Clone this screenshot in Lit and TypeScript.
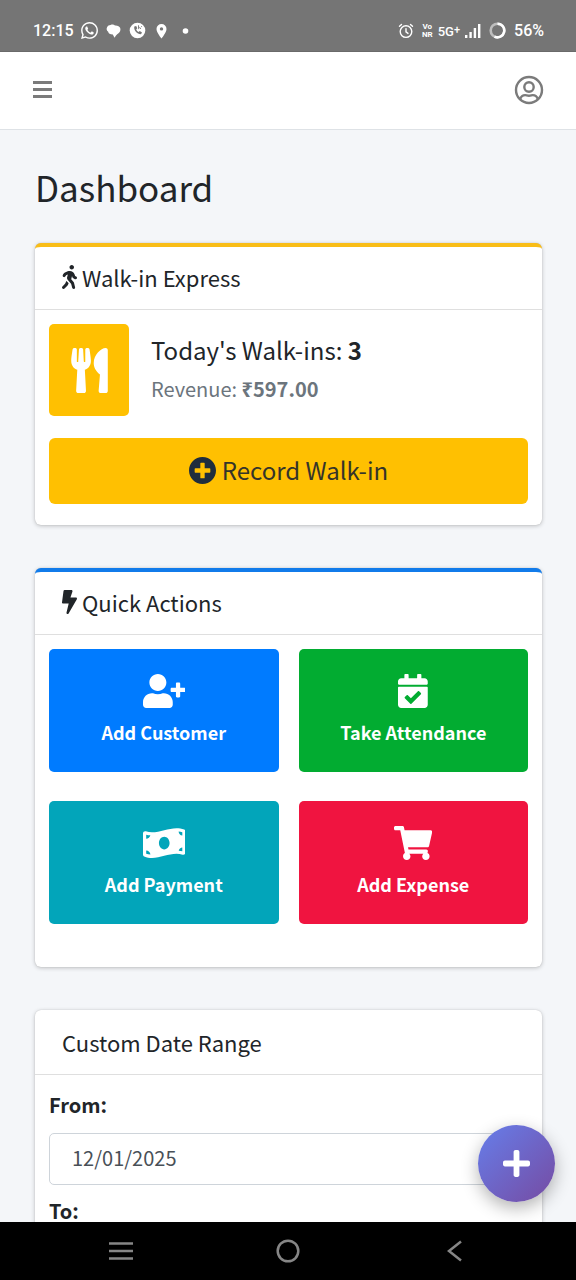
import { LitElement, html, css, svg, nothing } from "lit";
import { customElement, property } from "lit/decorators.js";

interface Glyph {
  box: string;
  path: string;
}

const GLYPHS: Record<string, Glyph> = {
  walking: {
    box: "0 0 320 512",
    path: "M208 96c26.5 0 48-21.5 48-48S234.5 0 208 0s-48 21.5-48 48 21.5 48 48 48zm94.5 149.1l-23.3-11.8-9.7-29.4c-14.7-44.6-55.7-75.8-102.2-75.9-36-.1-55.9 10.1-93.3 25.2-21.6 8.7-39.3 25.2-49.7 46.2L17.6 213c-7.8 15.8-1.5 35 14.2 42.9 15.6 7.9 34.6 1.5 42.5-14.3L81 228c3.5-7 9.3-12.5 16.5-15.4l26.8-10.8-15.2 60.7c-5.2 20.8.4 42.9 14.9 58.8l59.9 65.4c7.2 7.9 12.3 17.4 14.9 27.7l18.3 73.3c4.3 17.1 21.7 27.6 38.8 23.3 17.1-4.3 27.6-21.7 23.3-38.8l-22.2-89c-2.6-10.3-7.7-19.9-14.9-27.7l-45.5-49.7 17.2-68.7 5.5 16.5c5.3 16.1 16.7 29.4 31.7 37l23.3 11.8c15.6 7.9 34.6 1.5 42.5-14.3 7.7-15.7 1.4-35.1-14.3-43zM73.6 385.8c-3.2 8.1-8 15.4-14.2 21.5l-50 50.1c-12.5 12.5-12.5 32.8 0 45.3s32.7 12.5 45.2 0l59.4-59.4c6.1-6.1 10.9-13.4 14.2-21.5l13.5-33.8c-55.3-60.3-38.7-41.8-47.4-53.7l-20.7 51.5z",
  },
  bolt: {
    box: "0 0 320 512",
    path: "M296 160H180.6l42.6-129.8C227.2 15 215.7 0 200 0H56C44 0 33.8 8.9 32.2 20.8l-32 240C-1.7 275.2 9.5 288 24 288h118.7L96.6 482.5c-3.6 15.2 8 29.5 23.3 29.5 8.4 0 16.4-4.4 20.8-12l176-304c9.3-15.9-2.2-36-20.7-36z",
  },
  utensils: {
    box: "0 0 416 512",
    path: "M207.9 15.2c.8 4.7 16.1 94.5 16.1 128.8 0 52.3-27.8 89.6-68.9 104.6L168 486.7c.7 13.7-10.2 25.3-24 25.3H80c-13.7 0-24.7-11.5-24-25.3l12.9-238.1C27.7 233.6 0 196.2 0 144 0 109.6 15.3 19.9 16.1 15.2 19.3-5.1 61.4-5.4 64 16.3v141.2c1.3 3.4 15.1 3.2 16 0 1.4-25.3 7.9-139.2 8-141.8 3.3-20.8 44.7-20.8 47.9 0 .2 2.7 6.6 116.5 8 141.8.9 3.2 14.8 3.4 16 0V16.3c2.6-21.6 44.8-21.4 47.9-1.1zm119.2 285.7l-15 185.1c-1.2 14 9.9 26 23.9 26h56c13.3 0 24-10.7 24-24V24c0-13.2-10.7-24-24-24-82.5 0-221.4 178.5-64.9 300.9z",
  },
  plusCircle: {
    box: "8 8 496 496",
    path: "M256 8C119 8 8 119 8 256s111 248 248 248 248-111 248-248S393 8 256 8zm144 276c0 6.6-5.4 12-12 12h-92v92c0 6.6-5.4 12-12 12h-56c-6.6 0-12-5.4-12-12v-92h-92c-6.6 0-12-5.4-12-12v-56c0-6.6 5.4-12 12-12h92v-92c0-6.6 5.4-12 12-12h56c6.6 0 12 5.4 12 12v92h92c6.6 0 12 5.4 12 12v56z",
  },
  userPlus: {
    box: "0 0 640 512",
    path: "M624 208h-64v-64c0-8.8-7.2-16-16-16h-32c-8.8 0-16 7.2-16 16v64h-64c-8.8 0-16 7.2-16 16v32c0 8.8 7.2 16 16 16h64v64c0 8.8 7.2 16 16 16h32c8.8 0 16-7.2 16-16v-64h64c8.8 0 16-7.2 16-16v-32c0-8.8-7.2-16-16-16zm-400 48c70.7 0 128-57.3 128-128S294.7 0 224 0 96 57.3 96 128s57.3 128 128 128zm89.6 32h-16.7c-22.2 10.2-46.9 16-72.9 16s-50.6-5.8-72.9-16h-16.7C60.2 288 0 348.2 0 422.4V464c0 26.5 21.5 48 48 48h352c26.5 0 48-21.5 48-48v-41.6c0-74.2-60.2-134.4-134.4-134.4z",
  },
  calendarCheck: {
    box: "0 0 448 512",
    path: "M436 160H12c-6.627 0-12-5.373-12-12v-36c0-26.51 21.49-48 48-48h48V12c0-6.627 5.373-12 12-12h40c6.627 0 12 5.373 12 12v52h128V12c0-6.627 5.373-12 12-12h40c6.627 0 12 5.373 12 12v52h48c26.51 0 48 21.49 48 48v36c0 6.627-5.373 12-12 12zM12 192h424c6.627 0 12 5.373 12 12v260c0 26.51-21.49 48-48 48H48c-26.51 0-48-21.49-48-48V204c0-6.627 5.373-12 12-12zm333.296 95.947l-28.169-28.398c-4.667-4.705-12.265-4.736-16.97-.068L194.12 364.665l-45.98-46.352c-4.667-4.705-12.266-4.736-16.971-.068l-28.397 28.17c-4.705 4.667-4.736 12.265-.068 16.97l82.601 83.269c4.667 4.705 12.265 4.736 16.97.068l142.953-141.805c4.705-4.667 4.736-12.265.068-16.97z",
  },
  moneyBill: {
    box: "0 0 640 512",
    path: "M621.16 54.46C582.37 38.19 543.55 32 504.75 32c-123.17-.01-246.33 62.34-369.5 62.34-30.89 0-61.76-3.92-92.65-13.72-3.47-1.1-6.95-1.62-10.35-1.62C15.04 79 0 92.32 0 110.81v317.26c0 12.63 7.23 24.6 18.84 29.46C57.63 473.81 96.45 480 135.25 480c123.17 0 246.34-62.35 369.51-62.35 30.89 0 61.76 3.92 92.65 13.72 3.47 1.1 6.95 1.62 10.35 1.62 17.21 0 32.25-13.32 32.25-31.81V83.93c-.01-12.64-7.24-24.6-18.85-29.47zM48 132.22c20.12 5.04 41.12 7.57 62.72 8.93C104.84 170.54 79 192.69 48 192.69v-60.47zm0 285v-47.78c34.37 0 62.18 27.27 63.71 61.4-22.53-1.81-43.59-6.31-63.71-13.62zM320 352c-44.19 0-80-42.99-80-96 0-53.02 35.82-96 80-96s80 42.98 80 96c0 53.03-35.83 96-80 96zm272 27.78c-17.52-4.39-35.71-6.85-54.32-8.44 5.87-26.08 27.5-45.88 54.32-49.28v57.72zm0-236.11c-30.89-3.91-54.86-29.7-55.81-61.55 19.54 2.17 38.09 6.23 55.81 12.66v48.89z",
  },
  cart: {
    box: "0 0 576 512",
    path: "M528.12 301.319l47.273-208C578.806 78.301 567.391 64 551.99 64H159.208l-9.166-44.81C147.758 8.021 137.93 0 126.529 0H24C10.745 0 0 10.745 0 24v16c0 13.255 10.745 24 24 24h69.883l70.248 343.435C147.325 417.1 136 435.222 136 456c0 30.928 25.072 56 56 56s56-25.072 56-56c0-15.674-6.447-29.835-16.824-40h209.647C430.447 426.165 424 440.326 424 456c0 30.928 25.072 56 56 56s56-25.072 56-56c0-22.172-12.888-41.332-31.579-50.405l5.517-24.276c3.413-15.018-8.002-29.319-23.403-29.319H218.117l-6.545-32h293.145c11.206 0 20.92-7.754 23.403-18.681z",
  },
  plus: {
    box: "0 32 448 448",
    path: "M416 208H272V64c0-17.67-14.33-32-32-32h-32c-17.67 0-32 14.33-32 32v144H32c-17.67 0-32 14.33-32 32v32c0 17.67 14.33 32 32 32h144v144c0 17.67 14.33 32 32 32h32c17.67 0 32-14.33 32-32V304h144c17.67 0 32-14.33 32-32v-32c0-17.67-14.33-32-32-32z",
  },
};

const glyph = (name: string) => {
  const g = GLYPHS[name];
  return html`<svg class="glyph" viewBox=${g.box} fill="currentColor" aria-hidden="true">
    ${svg`<path d=${g.path}></path>`}
  </svg>`;
};

@customElement("status-bar")
class StatusBar extends LitElement {
  static styles = css`
    :host {
      display: flex;
      align-items: center;
      justify-content: space-between;
      height: 52px;
      box-sizing: border-box;
      padding: 10px 32px 0 33px;
      background: #757575;
      border-bottom: 1px solid #6a6a6a;
      color: #fff;
      font: 500 16px/20px Roboto, sans-serif;
    }
    .side {
      display: flex;
      align-items: center;
      gap: 8px;
    }
    .left {
      gap: 7px;
    }
    .signal {
      display: flex;
      align-items: center;
      gap: 5px;
    }
    .net {
      font-size: 13px;
    }
    .sup {
      font-size: 11px;
      vertical-align: 3px;
    }
    .vonr {
      display: grid;
      font-size: 8px;
      line-height: 8px;
      font-weight: 700;
      text-align: center;
    }
    svg {
      display: block;
    }
  `;
  render() {
    return html`
      <div class="side left">
        <span>12:15</span>
        <svg width="17" height="17" viewBox="0 0 24 24" fill="#fff" aria-hidden="true">
          <path d="M17.47 14.38c-.3-.15-1.76-.87-2.03-.97-.27-.1-.47-.15-.67.15-.2.3-.77.97-.94 1.16-.17.2-.35.22-.64.08-.3-.15-1.26-.46-2.39-1.48-.88-.79-1.48-1.76-1.65-2.06-.17-.3-.02-.46.13-.6.13-.14.3-.35.44-.53.15-.17.2-.3.3-.5.1-.2.05-.37-.02-.52-.08-.15-.67-1.61-.92-2.2-.24-.58-.49-.5-.67-.51h-.57c-.2 0-.52.07-.79.37-.27.3-1.04 1.02-1.04 2.48s1.07 2.88 1.21 3.07c.15.2 2.1 3.2 5.08 4.49 2.97 1.3 2.97.87 3.5.8.54-.04 1.76-.71 2-1.4.26-.7.26-1.29.18-1.42-.07-.12-.27-.2-.56-.34zM12.05 21.8a9.87 9.87 0 0 1-5.03-1.38l-.36-.21-3.74.98 1-3.65-.24-.37a9.86 9.86 0 0 1-1.51-5.26c0-5.45 4.44-9.88 9.89-9.88a9.88 9.88 0 1 1 0 19.77zM20.46 3.5A11.8 11.8 0 0 0 12.05 0C5.5 0 .16 5.33.16 11.89c0 2.1.55 4.14 1.59 5.95L.06 24l6.3-1.65a11.88 11.88 0 0 0 5.69 1.45c6.55 0 11.89-5.34 11.89-11.9 0-3.17-1.24-6.16-3.48-8.4z"></path>
        </svg>
        <svg width="17" height="16" viewBox="0 0 17 16" fill="#fff" aria-hidden="true">
          <path d="M5.500 2c2-.8 3.500-.4 4.500.5 2.500-.2 4.500.8 5.200 2.600.7 2-.2 4-1.700 5.200-.8.7-1.800 1.200-2.500 2.200l-1.500 2.300-1.700-3.300C5 11.500 3.500 10.500 3.200 8.800 1.500 7.500 1.200 5.500 2.200 4 2.800 2.700 4 2 5.500 2z"></path>
        </svg>
        <svg width="17" height="17" viewBox="0 0 17 17" aria-hidden="true">
          <circle cx="8.500" cy="8.500" r="7.800" fill="#fff"></circle>
          <path d="M5.300 4.500c-.8 3.800 2.800 7.800 6.700 7.700l1-1.800-2.200-1.300-1.200 1c-1.200-.6-2-1.500-2.400-2.700l1-1.100-1-2.200z" fill="#757575"></path>
          <path d="M9.500 3.300v3.400l1.200-1.100 1.300 1.300M12.800 4.200l-.8 1" fill="none" stroke="#757575" stroke-width=".9"></path>
        </svg>
        <svg width="17" height="16" viewBox="0 0 17 16" fill="#fff" aria-hidden="true">
          <path fill-rule="evenodd" d="M8.500 1a5 5 0 0 1 5 5c0 3.500-5 9.500-5 9.500S3.500 9.500 3.500 6a5 5 0 0 1 5-5zm0 3.200a1.700 1.700 0 1 0 0 3.400 1.700 1.700 0 0 0 0-3.400z"></path>
        </svg>
        <svg width="17" height="16" viewBox="0 0 17 16" fill="#fff" aria-hidden="true">
          <circle cx="8.500" cy="8" r="2.800"></circle>
        </svg>
      </div>
      <div class="side">
        <svg width="16" height="16" viewBox="0 0 16 16" fill="none" stroke="#fff" stroke-width="1.400" stroke-linecap="round" aria-hidden="true">
          <circle cx="8" cy="8.600" r="5.800"></circle>
          <path d="M8 5.600v3.200l2 1.600M1.500 3.300l2-1.900M14.500 3.300l-2-1.900"></path>
        </svg>
        <div class="signal">
          <span class="vonr"><span>Vo</span><span>NR</span></span>
          <span class="net">5G<span class="sup">+</span></span>
          <svg width="16" height="16" viewBox="0 0 16 16" fill="#fff" aria-hidden="true">
            <path d="M0 12h2.400v3H0zM4.400 9h2.400v6H4.400zM8.700 5h2.400v10H8.700zM13 1h2.400v14H13z"></path>
          </svg>
        </div>
        <svg width="17" height="17" viewBox="0 0 17 17" fill="none" stroke-width="2.600" aria-hidden="true">
          <circle cx="8.500" cy="8.500" r="6.800" stroke="#bdbdbd"></circle>
          <path d="M8.500 1.700a6.800 6.800 0 1 1-3 12.900" stroke="#fff"></path>
        </svg>
        <span>56%</span>
      </div>
    `;
  }
}

@customElement("dash-card")
class DashCard extends LitElement {
  @property() heading = "";
  @property() icon = "";
  @property({ reflect: true }) accent = "";

  static styles = css`
    :host {
      display: block;
      background: #fff;
      border-top: 2px solid #fff;
      border-radius: 6px;
      box-shadow: 0 0 1px rgba(0, 0, 0, 0.2), 0 1px 4px rgba(0, 0, 0, 0.22);
      overflow: hidden;
    }
    :host([accent="warning"]) {
      border-top: 4px solid #f9bd17;
    }
    :host([accent="primary"]) {
      border-top: 4px solid #117bea;
    }
    .head {
      display: flex;
      align-items: center;
      gap: 5px;
      height: 59px;
      padding: 0 27px 3px;
      border-bottom: 1px solid #dfdfdf;
    }
    .glyph {
      display: block;
      height: 24px;
      width: 15px;
    }
    .title {
      margin: 0;
      font-size: 22px;
      line-height: 32px;
      font-weight: 400;
    }
    .body {
      padding: 14px;
    }
  `;
  render() {
    return html`
      <div class="head">
        ${this.icon ? glyph(this.icon) : nothing}
        <h2 class="title">${this.heading}</h2>
      </div>
      <div class="body"><slot></slot></div>
    `;
  }
}

const ACTIONS = [
  { label: "Add Customer", icon: "userPlus", tone: "blue" },
  { label: "Take Attendance", icon: "calendarCheck", tone: "green" },
  { label: "Add Payment", icon: "moneyBill", tone: "teal" },
  { label: "Add Expense", icon: "cart", tone: "red" },
];

@customElement("app-root")
class AppRoot extends LitElement {
  static styles = css`
    :host {
      display: flex;
      flex-direction: column;
      height: 100vh;
      position: relative;
      overflow: hidden;
      background: #f4f6f9;
      color: #212529;
      font-family: "Noto Sans CJK SC", "Noto Sans", sans-serif;
    }
    button,
    input {
      font: inherit;
      color: inherit;
      box-sizing: border-box;
    }
    button {
      border: 0;
      padding: 0;
      background: none;
      cursor: pointer;
    }
    a {
      color: inherit;
      text-decoration: none;
    }
    svg {
      display: block;
    }
    .topbar {
      display: flex;
      align-items: center;
      justify-content: space-between;
      flex: none;
      height: 78px;
      box-sizing: border-box;
      padding: 0 32px 2px;
      background: #fff;
      border-bottom: 1px solid #dee2e6;
      color: #7b7b7b;
    }
    .page {
      flex: 1;
      min-height: 0;
      overflow: hidden;
      padding: 31px 34px 0 35px;
    }
    .page-title {
      margin: 0 0 30px;
      font-size: 35px;
      line-height: 52px;
      font-weight: 400;
    }
    .stack {
      display: grid;
      gap: 43px;
    }
    .summary {
      display: flex;
      gap: 22px;
      margin-bottom: 22px;
    }
    .badge {
      display: grid;
      place-items: center;
      width: 80px;
      height: 92px;
      border-radius: 5px;
      background: #ffc001;
      color: #fff;
    }
    .badge .glyph {
      height: 45px;
      width: 37px;
    }
    .figures {
      padding-top: 8px;
    }
    .figures p {
      margin: 0;
    }
    .count {
      font-size: 24px;
      line-height: 36px;
    }
    .revenue {
      font-size: 20px;
      line-height: 42px;
      color: #6c757d;
    }
    .record {
      display: flex;
      align-items: center;
      justify-content: center;
      gap: 6px;
      width: 100%;
      height: 66px;
      margin-bottom: 7px;
      padding-bottom: 2px;
      border-radius: 6px;
      background: #ffc001;
      color: #1f2d3d;
      font-size: 24px;
      line-height: 36px;
    }
    .record .glyph {
      height: 27px;
      width: 27px;
    }
    .record .word {
      color: #35342a;
    }
    .tiles {
      display: grid;
      grid-template-columns: 1fr 1fr;
      gap: 29px 20px;
      padding-bottom: 29px;
    }
    .tile {
      display: flex;
      flex-direction: column;
      align-items: center;
      height: 123px;
      padding-top: 25px;
      gap: 9px;
      border-radius: 5px;
      color: #fff;
      font-size: 18px;
      line-height: 30px;
      font-weight: 700;
    }
    .tile .glyph {
      height: 34px;
    }
    .blue {
      background: #007bff;
    }
    .green {
      background: #02ac31;
    }
    .teal {
      background: #02a5ba;
    }
    .red {
      background: #f01440;
    }
    .range {
      display: grid;
    }
    .label {
      font-size: 20px;
      line-height: 32px;
      font-weight: 700;
    }
    .field {
      height: 52px;
      width: 100%;
      margin: 12px 0 10px;
      padding: 0 22px 3px;
      border: 1px solid #ced4da;
      border-radius: 5px;
      background: #fff;
      color: #495057;
      font-size: 20px;
    }
    .fab {
      position: absolute;
      right: 21px;
      bottom: 78px;
      display: grid;
      place-items: center;
      width: 77px;
      height: 77px;
      border-radius: 50%;
      background: linear-gradient(135deg, #667eea 0%, #764ba2 100%);
      box-shadow: 0 6px 17px rgba(0, 0, 0, 0.3);
      color: #fff;
    }
    .fab .glyph {
      width: 27px;
      height: 27px;
    }
    .keys {
      display: grid;
      grid-template-columns: repeat(3, 1fr);
      justify-items: center;
      align-items: center;
      flex: none;
      height: 58px;
      box-sizing: border-box;
      padding: 0 38px;
      background: #000;
      position: relative;
    }
  `;
  render() {
    return html`
      <status-bar></status-bar>
      <header class="topbar">
        <button aria-label="Toggle menu">
          <svg width="21" height="18" viewBox="0 0 21 18" fill="currentColor" aria-hidden="true">
            <path d="M1 0h19v3H1zM1 7h19v3H1zM1 14h19v3H1z"></path>
          </svg>
        </button>
        <a href="#account" aria-label="Account">
          <svg width="30" height="30" viewBox="0 0 30 30" fill="none" stroke="currentColor" stroke-width="2.400" aria-hidden="true">
            <circle cx="15" cy="15" r="13"></circle>
            <circle cx="15" cy="12" r="4.700"></circle>
            <path d="M6.200 24.200c.8-2.700 2.600-4.100 5-4.100 1.200 0 2 .6 3.800.6s2.600-.6 3.800-.6c2.400 0 4.200 1.400 5 4.100"></path>
          </svg>
        </a>
      </header>
      <main class="page">
        <h1 class="page-title">Dashboard</h1>
        <div class="stack">
          <dash-card accent="warning" icon="walking" heading="Walk-in Express">
            <div class="summary">
              <span class="badge">${glyph("utensils")}</span>
              <div class="figures">
                <p class="count">Today's Walk-ins: <b>3</b></p>
                <p class="revenue">Revenue: <b>₹597.00</b></p>
              </div>
            </div>
            <button class="record">${glyph("plusCircle")}<span class="word">Record Walk-in</span></button>
          </dash-card>
          <dash-card accent="primary" icon="bolt" heading="Quick Actions">
            <div class="tiles">
              ${ACTIONS.map(
                (a) => html`<button class="tile ${a.tone}">${glyph(a.icon)}<span>${a.label}</span></button>`
              )}
            </div>
          </dash-card>
          <dash-card heading="Custom Date Range">
            <div class="range">
              <label class="label" for="from">From:</label>
              <input class="field" id="from" type="text" inputmode="numeric" value="12/01/2025" />
              <label class="label" for="to">To:</label>
              <input class="field" id="to" type="text" inputmode="numeric" />
            </div>
          </dash-card>
        </div>
      </main>
      <button class="fab" aria-label="Add">${glyph("plus")}</button>
      <nav class="keys" aria-label="System">
        <button aria-label="Recent apps">
          <svg width="24" height="20" viewBox="0 0 24 20" fill="none" stroke="#868686" stroke-width="2.500" aria-hidden="true">
            <path d="M0 2.500h24M0 10h24M0 17.500h24"></path>
          </svg>
        </button>
        <button aria-label="Home">
          <svg width="24" height="24" viewBox="0 0 24 24" fill="none" stroke="#868686" stroke-width="2.500" aria-hidden="true">
            <circle cx="12" cy="12" r="10.300"></circle>
          </svg>
        </button>
        <button aria-label="Back">
          <svg width="15" height="22" viewBox="0 0 15 22" fill="none" stroke="#868686" stroke-width="2.500" aria-hidden="true">
            <path d="M14 1.500L2 11l12 9.500"></path>
          </svg>
        </button>
      </nav>
    `;
  }
}
